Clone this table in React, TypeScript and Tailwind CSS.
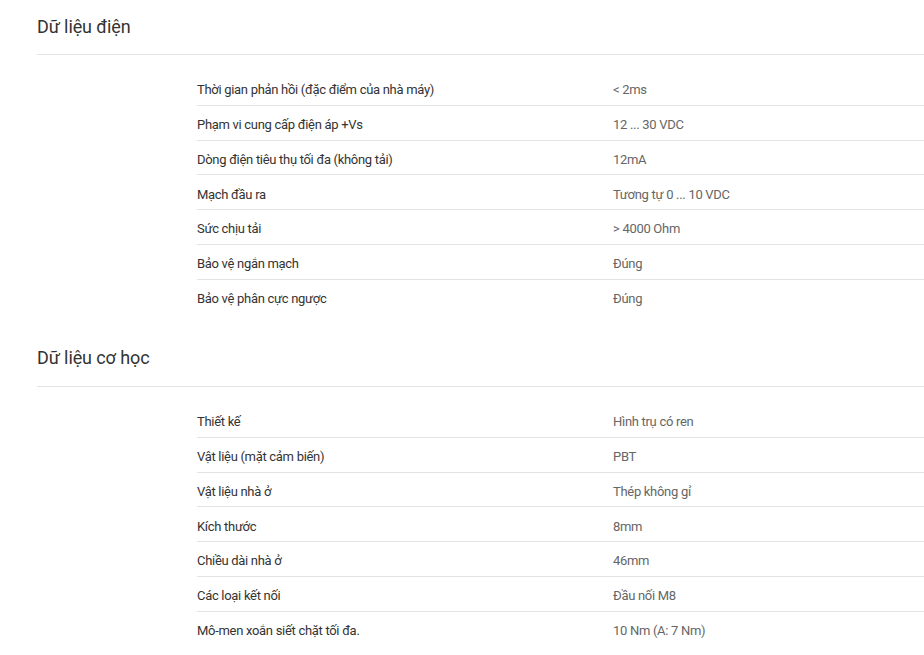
const sections: { title: string; rows: [string, string][] }[] = [
    {
        title: 'Dữ liệu điện',
        rows: [
            ['Thời gian phản hồi (đặc điểm của nhà máy)', '< 2ms'],
            ['Phạm vi cung cấp điện áp +Vs', '12 ... 30 VDC'],
            ['Dòng điện tiêu thụ tối đa (không tải)', '12mA'],
            ['Mạch đầu ra', 'Tương tự 0 ... 10 VDC'],
            ['Sức chịu tải', '> 4000 Ohm'],
            ['Bảo vệ ngắn mạch', 'Đúng'],
            ['Bảo vệ phân cực ngược', 'Đúng'],
        ],
    },
    {
        title: 'Dữ liệu cơ học',
        rows: [
            ['Thiết kế', 'Hình trụ có ren'],
            ['Vật liệu (mặt cảm biến)', 'PBT'],
            ['Vật liệu nhà ở', 'Thép không gỉ'],
            ['Kích thước', '8mm'],
            ['Chiều dài nhà ở', '46mm'],
            ['Các loại kết nối', 'Đầu nối M8'],
            ['Mô-men xoắn siết chặt tối đa.', '10 Nm (A: 7 Nm)'],
        ],
    },
];

export default function App() {
    return (
        <div className="min-h-screen bg-white pl-[37px] overflow-hidden" style={{ fontFamily: 'Roboto, "Noto Sans", sans-serif' }}>
            {sections.map((section) => (
                <div key={section.title}>
                    <div className="h-[55px] border-b border-[#e3e3e3] flex items-center -mr-10 pb-px">
                        <h2 className="text-[18px] leading-[26px] tracking-[-0.1px] text-[#333]">{section.title}</h2>
                    </div>
                    <div className="ml-[160px] mt-4 mb-[17.4px] -mr-10">
                        {section.rows.map(([label, value], i) => (
                            <div
                                key={label}
                                className={`h-[34.8px] flex items-center pt-1 text-[13px] tracking-[-0.3px] ${i < section.rows.length - 1 ? 'border-b border-[#e3e3e3]' : ''}`}
                            >
                                <span className="w-[416px] text-[#333]">{label}</span>
                                <span className="text-[#666]">{value}</span>
                            </div>
                        ))}
                    </div>
                </div>
            ))}
        </div>
    );
}
